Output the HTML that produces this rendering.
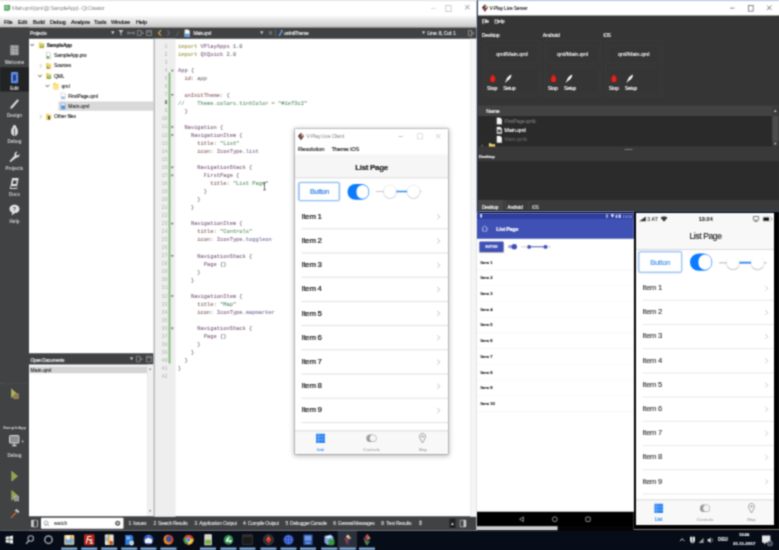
<!DOCTYPE html>
<html lang="en">
<head>
<meta charset="utf-8">
<title>Qt Creator - V-Play Live</title>
<style>
html,body{margin:0;padding:0;}
body{width:779px;height:550px;overflow:hidden;position:relative;background:#0c1421;font-family:"Liberation Sans",sans-serif;}
body{overflow:hidden;}
#wrap{position:absolute;left:-16px;top:-16px;width:811px;height:582px;filter:url(#soft);}
#root{position:absolute;left:16px;top:16px;width:3116px;height:2200px;transform:scale(.25);transform-origin:0 0;}
.a{position:absolute;}
.t{position:absolute;white-space:nowrap;line-height:1;-webkit-text-stroke:0.64px;}
.c{transform:translateX(-50%);}
/* ---------- Qt Creator ---------- */
#qt{left:0;top:0;width:1906px;height:2121.6px;background:#fff;overflow:hidden;}
#qt .title{left:0;top:0;width:1908px;height:66px;background:#fff;}
#qt .menu{left:0;top:63.2px;width:1908px;height:46.8px;background:linear-gradient(#fafafa,#e4e4e4 40%,#d4d4d4 75%,#bcbcbc);}
#qt .menu .t{font-size:22px;color:#222;top:14.8px;letter-spacing:-0.4px;-webkit-text-stroke:0.8px #222;}
.dk{background:#404244;}
.side .t{font-size:18px;color:#cdcdcd;font-weight:bold;-webkit-text-stroke:0;left:58px;transform:translateX(-50%);}
.code{font-family:"Liberation Mono",monospace;font-size:21.52px;left:712px;top:170.4px;line-height:32.2px;white-space:pre;color:#747474;position:absolute;margin:0;-webkit-text-stroke:0.4px;}
.code .k{color:#a6a65a;} .code .ty{color:#8a6a8a;} .code .p{color:#966a6a;} .code .s{color:#689a72;} .code .n{color:#7e7eaa;} .code .i{color:#7a7a7a;font-style:italic;}
.ln{font-family:"Liberation Mono",monospace;font-size:20px;line-height:32.2px;white-space:pre;color:#b4b4b4;position:absolute;margin:0;text-align:right;left:620px;width:50px;top:170.4px;}
.sb .t{font-size:21.6px;color:#d6d6d6;top:17.6px;letter-spacing:-0.4px;}
/* ---------- Live client ---------- */
#lc{left:1180px;top:516px;width:612px;height:1300px;background:#fff;box-shadow:0 4px 20px 4px rgba(0,0,0,.28),0 0 0 2.4px rgba(120,120,120,.5);overflow:hidden;}
.item{position:absolute;white-space:nowrap;line-height:1;color:#1a1a1a;-webkit-text-stroke:0.88px;}
.div{position:absolute;height:4px;background:#e1e1e1;}
.chev{position:absolute;width:12.8px;height:12.8px;border-right:3.6px solid #c4c4c4;border-top:3.6px solid #c4c4c4;transform:rotate(45deg);}
/* ---------- Live server ---------- */
#ls{left:1912px;top:0;width:1204px;height:848px;background:#353535;overflow:hidden;}
#ls .t{color:#f0f0f0;font-size:22.4px;letter-spacing:-0.4px;}
.gb{position:absolute;border:3.2px solid #3d3d3d;border-radius:6px;box-sizing:border-box;}
/* ---------- Android ---------- */
#an{left:1908px;top:850px;width:628px;height:1256px;background:#fff;overflow:hidden;}
#anb{left:1904.8px;top:850px;width:4px;height:1256px;background:#cfcfcf;}
#an .it{position:absolute;left:14.4px;font-size:16.4px;font-weight:bold;color:#1e1e1e;-webkit-text-stroke:0.56px;white-space:nowrap;line-height:1;}
/* ---------- iOS ---------- */
#iosf{left:2535.2px;top:848px;width:584px;height:1270px;background:#000;}
#ios{left:2544px;top:852px;width:552px;height:1248px;background:#fff;overflow:hidden;}
#ios .item{color:#2e2e2e;-webkit-text-stroke:0.32px;}
#ios .div{background:#e9e9e9;}
#ios .chev{border-color:#cfcfcf;}
/* ---------- Taskbar ---------- */
#tb{left:0;top:2121.6px;width:3116px;height:78.4px;background:#070d18;}
.ti{position:absolute;top:14.4px;width:44px;height:48px;border-radius:8px;}
.ul{position:absolute;top:68.8px;height:9.6px;width:64px;background:#7da6d4;}
.blur{}
</style>
</head>
<body>
<svg width="0" height="0" style="position:absolute"><filter id="soft" x="0" y="0" width="100%" height="100%" color-interpolation-filters="sRGB"><feConvolveMatrix order="3" kernelMatrix="0.0484 0.1232 0.0484 0.1232 0.3136 0.1232 0.0484 0.1232 0.0484" edgeMode="duplicate" preserveAlpha="true"/></filter></svg>
<div id="wrap">
<div id="root">
<!-- edge extensions (outside the viewport, keep blur from bleeding) -->
<div class="a" style="left:-48px;top:-48px;width:3212px;height:56px;background:#fff;"></div>
<div class="a" style="left:-48px;top:0;width:56px;height:68px;background:#fff;"></div>
<div class="a" style="left:3108px;top:0;width:56px;height:62.4px;background:#fff;"></div>
<div class="a" style="left:-48px;top:66px;width:56px;height:44px;background:#dcdcdc;"></div>
<div class="a" style="left:-48px;top:110px;width:56px;height:2012px;background:#404244;"></div>
<div class="a" style="left:3108px;top:60px;width:56px;height:792px;background:#353535;"></div>
<div class="a" style="left:3108px;top:848px;width:56px;height:1280px;background:#000;"></div>
<div class="a" style="left:-48px;top:2121.6px;width:3212px;height:128px;background:#070d18;"></div>

<!-- ================= QT CREATOR ================= -->
<div id="qt" class="a">
  <div class="a title">
    <div class="a" style="left:0;top:0;width:1908px;height:2.8px;background:#cfcfcf;"></div>
    <svg class="a" style="left:13.6px;top:16.8px" width="28" height="28" viewBox="0 0 7 7"><path d="M1.400 .8h4.600a.8 .8 0 0 1 .8 .8v3.200l-1.600 1.600H1.400a.8 .8 0 0 1-.8-.8V1.600a.8 .8 0 0 1 .8-.8z" fill="#48995a"/><path d="M2 2.200h2.600v2.400H2z" fill="none" stroke="#dff0e2" stroke-width=".7"/></svg>
    <div class="t blur" style="left:48px;top:19.6px;font-size:24.4px;color:#adadad;letter-spacing:-2.4px;">Main.qml (qml @ SampleApp) - Qt Creator</div>
    <div class="t" style="left:1724px;top:14px;font-size:32px;color:#bbb;">–</div>
    <div class="a" style="left:1782px;top:20px;width:18.4px;height:21.6px;border:3.2px solid #bdbdbd;"></div>
    <div class="t" style="left:1856px;top:14.4px;font-size:32px;color:#b0b0b0;">✕</div>
  </div>
  <div class="a menu blur">
    <div class="t" style="left:16px;">File</div>
    <div class="t" style="left:72px;">Edit</div>
    <div class="t" style="left:132px;">Build</div>
    <div class="t" style="left:200px;">Debug</div>
    <div class="t" style="left:284px;">Analyze</div>
    <div class="t" style="left:376px;">Tools</div>
    <div class="t" style="left:444px;">Window</div>
    <div class="t" style="left:544px;">Help</div>
  </div>
  <!-- left mode bar + toolbars -->
  <div class="a dk" style="left:0;top:110px;width:116px;height:2012px;"></div>
  <div class="a dk" style="left:0;top:110px;width:1908px;height:44.8px;"></div>
  <div class="a dk" style="left:116px;top:1413.2px;width:498px;height:45.2px;"></div>
  <div class="a dk sb" id="sbar" style="left:0;top:2064.8px;width:1908px;height:56.8px;">
    <div class="blur">
    <svg class="a" style="left:124px;top:12.8px" width="28" height="32" viewBox="0 0 7 8"><rect x=".5" y=".5" width="6" height="7" rx=".8" fill="none" stroke="#c8c8c8" stroke-width=".9"/><rect x=".5" y=".5" width="2.400" height="7" fill="#c8c8c8"/></svg>
    <div class="a" style="left:164px;top:6.4px;width:330.4px;height:44px;background:#fff;border-radius:4px;"></div>
    <svg class="a" style="left:174px;top:16px" width="24" height="26" viewBox="0 0 6 6.500"><circle cx="2.600" cy="2.600" r="1.900" fill="none" stroke="#8c8c8c" stroke-width=".8"/><path d="M1.400 5.800L2.600 4M4 4l1.400 1.800" stroke="#8c8c8c" stroke-width=".8"/></svg>
    <div class="t" style="left:215.6px;top:18px;color:#555;font-size:19.6px;letter-spacing:0.5px;">watch</div>
    <svg class="a" style="left:458px;top:15.6px" width="26" height="26" viewBox="0 0 6.500 6.500"><circle cx="3.200" cy="3.200" r="2.500" fill="#5c5c5c"/><circle cx="3.200" cy="3.200" r="1" fill="#fff"/></svg>
    <div class="t" style="left:513.6px;font-size:19.8px;letter-spacing:-0.828px;">1&nbsp; Issues</div>
    <div class="t" style="left:614px;font-size:19.8px;letter-spacing:-1.192px;">2&nbsp; Search Results</div>
    <div class="t" style="left:778.4px;font-size:19.8px;letter-spacing:-0.656px;">3&nbsp; Application Output</div>
    <div class="t" style="left:972.4px;font-size:19.8px;letter-spacing:-1.012px;">4&nbsp; Compile Output</div>
    <div class="t" style="left:1142px;font-size:19.8px;letter-spacing:-1.172px;">5&nbsp; Debugger Console</div>
    <div class="t" style="left:1333.2px;font-size:19.8px;letter-spacing:-1.248px;">6&nbsp; General Messages</div>
    <div class="t" style="left:1525.2px;font-size:19.8px;letter-spacing:-0.636px;">8&nbsp; Test Results</div>
    <div class="t" style="left:1672px;top:15.2px;font-size:24px;">⇕</div>
    <div class="a" style="left:1798px;top:9.6px;width:24px;height:38px;background:#1f2021;"></div><div class="t" style="left:1802.4px;top:20px;font-size:15.2px;color:#eee;">▲</div>
    <svg class="a" style="left:1838px;top:12.8px" width="28" height="32" viewBox="0 0 7 8"><rect x=".5" y=".5" width="6" height="7" rx=".8" fill="none" stroke="#c8c8c8" stroke-width=".9"/><rect x="4" y=".5" width="2.500" height="7" fill="#c8c8c8"/></svg>
    </div>
  </div>

  <!-- toolbar contents -->
  <div class="blur">
  <div class="t" style="left:120.4px;top:123.2px;font-size:19.6px;color:#e6e6e6;letter-spacing:-0.684px;">Projects</div>
  <div class="t" style="left:442px;top:122px;font-size:18.4px;color:#d8d8d8;">▼</div>
  <svg class="a" style="left:464px;top:114px" width="152" height="36" viewBox="0 0 38 9">
    <path d="M2.5 1.5h5l-2 2.8v3l-1 -.8v-2.2z" fill="#bdbdbd"/>
    <path d="M12.5 4.5h5M12 3v3M18 3v3" stroke="#9a9a9a" stroke-width="1" fill="none"/>
    <path d="M21.5 2h3.5v5h-3.5zM25 3l2.5 1.5l-2.5 1.5" stroke="#8e8e8e" stroke-width=".8" fill="none"/>
    <path d="M30.5 2h5v5h-5zM30.5 3.6h5" stroke="#8a8a8a" stroke-width=".9" fill="none"/>
  </svg>
  <svg class="a" style="left:624px;top:114px" width="160" height="36" viewBox="0 0 40 9">
    <path d="M5 1.6L2.6 4.5L5 7.4" stroke="#d89a3c" stroke-width="1.3" fill="none"/>
    <path d="M11.4 1.8L13.4 4.5L11.4 7.2" stroke="#6a6c6e" stroke-width="1.1" fill="none"/>
    <path d="M19.5 6.5l1 1l2.2-4.6" stroke="#666" stroke-width=".9" fill="none"/>
    <path d="M28.6 1h3.6l1.6 1.6v5.6h-5.2z" fill="#f4f4f4"/>
    <path d="M28.6 5.2h5.2v3h-5.2z" fill="#5b9bdc"/>
  </svg>
  <div class="t" style="left:773.6px;top:123.2px;font-size:19.6px;color:#e6e6e6;letter-spacing:-1.168px;">Main.qml</div>
  <div class="t" style="left:1038px;top:122px;font-size:18.4px;color:#d0d0d0;">▼</div>
  <div class="t" style="left:1070px;top:120px;font-size:22.4px;color:#8d8d8d;">✕</div>
  <div class="a" style="left:1100px;top:118px;width:2.8px;height:28px;background:#6a6a6a;"></div>
  <svg class="a" style="left:1110px;top:118px" width="24" height="28" viewBox="0 0 6 7"><path d="M1 6.2L3.6 1.6l1.2 .8L2.2 6.8z" fill="#58a0f0"/><path d="M3.4 .6l1.8 1.2" stroke="#9cc8ff" stroke-width="1"/></svg>
  <div class="t" style="left:1137.2px;top:123.2px;font-size:19.6px;color:#e6e6e6;letter-spacing:-1.12px;">onInitTheme</div>
  <div class="t" style="left:1686px;top:123.2px;font-size:16.8px;color:#d0d0d0;">▼</div>
  <div class="t" style="left:1710px;top:123.2px;font-size:19.6px;color:#e0e0e0;letter-spacing:-0.528px;">Line: 8, Col: 1</div>
  <svg class="a" style="left:1870px;top:118px" width="32" height="32" viewBox="0 0 8 8"><path d="M1 1h3v5.5h-3zM4 2.2l2.6 1.6L4 5.4" stroke="#9a9a9a" stroke-width=".8" fill="none"/></svg>
  </div>

  <!-- mode selector -->
  <div class="a" style="left:0;top:268.8px;width:116px;height:97.2px;background:#222324;"></div>
  <div class="side blur">
    <svg class="a" style="left:41.2px;top:181.2px" width="34" height="40.8" viewBox="0 0 8.5 10.2"><g fill="#8d8f91" stroke="#cfcfcf" stroke-width=".55"><rect x="0.4" y="0.4" width="2.1" height="2.5"/><rect x="3.2" y="0.4" width="2.1" height="2.5"/><rect x="6" y="0.4" width="2.1" height="2.5"/><rect x="0.4" y="3.8" width="2.1" height="2.5"/><rect x="3.2" y="3.8" width="2.1" height="2.5"/><rect x="6" y="3.8" width="2.1" height="2.5"/><rect x="0.4" y="7.2" width="2.1" height="2.5"/><rect x="3.2" y="7.2" width="2.1" height="2.5"/><rect x="6" y="7.2" width="2.1" height="2.5"/></g></svg>
    <div class="t" style="top:239.2px;">Welcome</div>
    <svg class="a" style="left:43.2px;top:288px" width="30.4" height="45.6" viewBox="0 0 7.6 11.4"><rect x=".5" y=".5" width="6.6" height="10.4" rx=".9" fill="#2f6fe0" stroke="#8db6ff" stroke-width=".8"/><rect x="1.9" y="2.2" width="3.8" height="7" fill="#1c3c96" stroke="#dbe6ff" stroke-width=".6" stroke-dasharray=".9 .5"/></svg>
    <div class="t" style="top:344.8px;color:#e6e6e6;">Edit</div>
    <svg class="a" style="left:36px;top:392px" width="44" height="48" viewBox="0 0 11 12"><path d="M1.200 11l.8-2.800L8.400 1.200l1.600 1.400L3.400 10.200z" fill="#d6d6d6"/></svg>
    <div class="t" style="top:451.2px;">Design</div>
    <svg class="a" style="left:38px;top:498px" width="40" height="48" viewBox="0 0 10 12"><ellipse cx="5" cy="7" rx="3.4" ry="4.4" fill="#dcdcdc"/><circle cx="5" cy="2.4" r="1.9" fill="#dcdcdc"/><path d="M5 4v7" stroke="#404244" stroke-width=".8"/></svg>
    <div class="t" style="top:556.8px;">Debug</div>
    <svg class="a" style="left:36px;top:604px" width="44" height="48" viewBox="0 0 11 12"><path d="M1.2 11.2L.6 10l5-5.4c-.6-1.8 .2-3.4 2.2-4l.6 .4-1.4 1.8 .6 1.4 1.6 .2 1.2-1.6c.6 2-.6 3.8-2.8 3.8z" fill="#e0e0e0"/></svg>
    <div class="t" style="top:663.2px;">Projects</div>
    <svg class="a" style="left:38px;top:710px" width="40" height="48" viewBox="0 0 10 12"><path d="M2.6 .6h6.6l-1.6 8.2H1z" fill="#dedede"/><path d="M1 8.8l-.4 2.2h6.8l.2-1" stroke="#dedede" stroke-width="1" fill="none"/><path d="M3.8 3h3.4l-.6 3.4H3.200z" fill="#404244"/></svg>
    <div class="t" style="top:768.8px;">Docs</div>
    <svg class="a" style="left:36px;top:816px" width="44" height="48" viewBox="0 0 11 12"><path d="M5.5 .8c2.800 0 5 1.800 5 4.200s-2.200 4.200-5 4.200l-2.800 2.200 .4-2.800C1.400 7.800 .5 6.500 .5 5 .5 2.600 2.700 .8 5.500 .8z" fill="#e2e2e2"/><text x="3.6" y="7.300" font-size="6" font-weight="bold" fill="#404244" font-family="Liberation Sans">?</text></svg>
    <div class="t" style="top:875.2px;">Help</div>

    <svg class="a" style="left:38px;top:1550px" width="40" height="48" viewBox="0 0 10 12"><path d="M1.600 .8l5.600 5-5.600 5z" fill="#a9b45c"/><path d="M4.200 6.200h4.600v4.800H4.200z" fill="#8b7a52" stroke="#c9a85a" stroke-width=".6"/></svg>
    <div class="a" style="left:4px;top:1532px;width:108px;height:0;border-top:2.4px dotted #6a6c6e;"></div>
    <div class="t" style="top:1702.4px;font-size:16.8px;">SampleApp</div>
    <svg class="a" style="left:34px;top:1738px" width="64" height="52" viewBox="0 0 16 13"><rect x="1" y="1" width="9.4" height="7.600" rx=".8" fill="#8e9092" stroke="#d8d8d8" stroke-width="1"/><path d="M3.600 11.200h4.400M5.800 8.800v2.400" stroke="#d8d8d8" stroke-width="1.200"/><path d="M13.800 5.500l1.400 1.400-1.400 1.400z" fill="#e8e8e8"/></svg>
    <div class="t" style="top:1811.2px;">Debug</div>
    <svg class="a" style="left:43.2px;top:1882px" width="32" height="46" viewBox="0 0 8 11.5"><path d="M1 .8l5.800 4.900L1 10.600z" fill="#8fa548" stroke="#b5c878" stroke-width=".5"/></svg>
    <svg class="a" style="left:43.2px;top:1959.2px" width="36" height="48" viewBox="0 0 9 12"><path d="M1 .8l5.800 4.900L1 10.600z" fill="#8fa548" stroke="#b5c878" stroke-width=".5"/><rect x="3.800" y="6.400" width="4.200" height="4.800" fill="#8f9193" stroke="#c8c8c8" stroke-width=".5"/></svg>
    <svg class="a" style="left:37.6px;top:2030.4px" width="44" height="48" viewBox="0 0 12 11"><path d="M1 10l5.600-6.200 1.200 1.200L2.200 10.800z" fill="#d06a28"/><path d="M5.400 2.200L8 .6l3 3-1.600 1.400z" fill="#c9c9c9"/></svg>
  </div>

  <!-- project tree -->
  <div class="a" style="left:234px;top:406.4px;width:379.6px;height:36.8px;background:#d9d9d9;"></div>
  <div class="blur" id="tree">
    <svg class="a" style="left:120.4px;top:172px" width="17.6" height="16" viewBox="0 0 4.4 4"><path d="M.4 .8L2.200 3l1.800-2.200" stroke="#555" stroke-width=".9" fill="none"/></svg>
    <svg class="a" style="left:154px;top:165.6px" width="24" height="28.8" viewBox="0 0 6 7.200"><path d="M0 .8h2.400l.6 .8h3v5.400H0z" fill="#f3d56b"/><rect x="1.600" y="3.400" width="3.600" height="3" fill="#7aa83c"/><rect x="2.400" y="4" width="1.600" height="1.200" fill="#fff"/></svg>
    <div class="t" style="left:186.8px;top:169.6px;font-size:19.56px;color:#222;font-weight:bold;letter-spacing:-0.764px;">SampleApp</div>
    <svg class="a" style="left:184px;top:207.2px" width="20" height="28.8" viewBox="0 0 5 7.200"><path d="M.4 .3h2.800l1.400 1.400v5.200H.4z" fill="#fff" stroke="#9a9a9a" stroke-width=".5"/><rect x=".8" y="4.400" width="2.400" height="2.200" fill="#58a944"/></svg>
    <div class="t" style="left:216px;top:210.8px;font-size:20px;color:#3a3a3a;font-weight:normal;letter-spacing:-0.604px;">SampleApp.pro</div>
    <svg class="a" style="left:154.8px;top:253.6px" width="16" height="19.2" viewBox="0 0 4 4.800"><path d="M.8 .4L3 2.400L.8 4.400" stroke="#b5b5b5" stroke-width=".8" fill="none"/></svg>
    <svg class="a" style="left:184px;top:248.8px" width="22.4" height="28.8" viewBox="0 0 5.600 7.200"><path d="M0 .8h2.400l.6 .8h2.600v5.400H0z" fill="#f3d56b"/><text x="1" y="6.300" font-size="4" font-weight="bold" fill="#3d6aa8" font-family="Liberation Sans">h</text></svg>
    <div class="t" style="left:216px;top:252.4px;font-size:20px;color:#3a3a3a;font-weight:normal;letter-spacing:-0.768px;">Sources</div>
    <svg class="a" style="left:151.2px;top:295.6px" width="17.6" height="16" viewBox="0 0 4.4 4"><path d="M.4 .8L2.200 3l1.800-2.200" stroke="#555" stroke-width=".9" fill="none"/></svg>
    <svg class="a" style="left:184px;top:289.2px" width="22.4" height="28.8" viewBox="0 0 5.600 7.200"><path d="M0 .8h2.400l.6 .8h2.600v5.400H0z" fill="#f3d56b"/><rect x="1.200" y="3.400" width="3.400" height="3" fill="#5f9d4d"/><rect x="1.800" y="4" width="2" height="1" fill="#e8f4e0"/></svg>
    <div class="t" style="left:216px;top:292.8px;font-size:20px;color:#3a3a3a;font-weight:normal;letter-spacing:-1.112px;">QML</div>
    <svg class="a" style="left:181.2px;top:335.6px" width="17.6" height="16" viewBox="0 0 4.4 4"><path d="M.4 .8L2.200 3l1.800-2.200" stroke="#555" stroke-width=".9" fill="none"/></svg>
    <svg class="a" style="left:210.8px;top:329.2px" width="24" height="29.6" viewBox="0 0 6 7.400"><path d="M.2 .6h2.600l.8 1h2.200v5.600H.2z" fill="#f6d868"/><path d="M.2 2.400h5.600v4.800H.2z" fill="#fae38d"/></svg>
    <div class="t" style="left:245.6px;top:332.8px;font-size:20px;color:#3a3a3a;font-weight:normal;letter-spacing:0.724px;">qml</div>
    <svg class="a" style="left:242px;top:369.6px" width="20.8" height="28.8" viewBox="0 0 5.200 7.200"><path d="M.4 .3h3l1.400 1.400v5.200H.4z" fill="#fff" stroke="#a4a4a4" stroke-width=".5"/><rect x="1" y="4.200" width="3.200" height="1.800" fill="#7aa7dc"/></svg>
    <div class="t" style="left:273.2px;top:373.2px;font-size:20px;color:#3a3a3a;font-weight:normal;letter-spacing:-0.412px;">FirstPage.qml</div>
    <svg class="a" style="left:242px;top:410.4px" width="20.8" height="28.8" viewBox="0 0 5.200 7.200"><path d="M.4 .3h3l1.400 1.400v5.200H.4z" fill="#e8f0fb" stroke="#5c8fd0" stroke-width=".6"/><rect x=".8" y="3" width="3.600" height="3.400" fill="#4f8fdc"/></svg>
    <div class="t" style="left:273.2px;top:414px;font-size:20px;color:#3a3a3a;font-weight:normal;letter-spacing:0.46px;">Main.qml</div>
    <svg class="a" style="left:154.8px;top:456.8px" width="16" height="19.2" viewBox="0 0 4 4.800"><path d="M.8 .4L3 2.400L.8 4.400" stroke="#b5b5b5" stroke-width=".8" fill="none"/></svg>
    <svg class="a" style="left:184px;top:452px" width="22.4" height="28.8" viewBox="0 0 5.600 7.200"><path d="M0 .8h2.400l.6 .8h2.600v5.400H0z" fill="#f3d56b"/><path d="M2 6.600V3.600l1-1 1 1v3z" fill="#555"/></svg>
    <div class="t" style="left:216px;top:455.6px;font-size:20px;color:#3a3a3a;font-weight:normal;letter-spacing:-0.284px;">Other files</div>
  </div>

  <!-- open documents -->
  <div class="blur">
  <div class="t" style="left:122.4px;top:1430px;font-size:19.6px;color:#e8e8e8;letter-spacing:-1.332px;">Open Documents</div>
  <div class="t" style="left:518px;top:1426.4px;font-size:17.2px;color:#d6d6d6;">▼</div>
  <svg class="a" style="left:540px;top:1420px" width="72" height="32" viewBox="0 0 18 8"><path d="M1.500 1.200h3.400v5.600H1.500zM4.900 2.400l2.400 1.600-2.400 1.600" stroke="#909090" stroke-width=".8" fill="none"/><path d="M11.500 1.200h5v5.600h-5zM11.500 2.800h5" stroke="#8c8c8c" stroke-width=".9" fill="none"/></svg>
  <div class="a" style="left:118px;top:1465.6px;width:470px;height:27.2px;background:#d4d4d4;"></div>
  <div class="t" style="left:122.4px;top:1470px;font-size:20px;color:#333;letter-spacing:0.26px;">Main.qml</div>
  </div>
  <div class="a" style="left:590.4px;top:1458.4px;width:23.2px;height:605.6px;background:#f0f0f0;border-left:2px solid #dcdcdc;"></div>
  <div class="t" style="left:594.4px;top:1468px;font-size:13.6px;color:#8a8a8a;">▲</div>
  <div class="t" style="left:594.4px;top:2036px;font-size:13.6px;color:#8a8a8a;">▼</div>
  <!-- project tree splitter -->
  <div class="a" style="left:613.6px;top:154.8px;width:6.4px;height:1912px;background:#b9b9b9;"></div>
  <!-- editor gutter -->
  <div class="a" style="left:620px;top:154.8px;width:82px;height:1912px;background:#eeeeee;"></div>
  <div class="a" style="left:674px;top:290.4px;width:7.6px;height:1164px;background:#84bd7a;"></div>

  <!-- editor -->
  <pre class="ln blur">1
2
3
4
5
6
7
<b style="color:#555">8</b>
9
10
11
12
13
14
15
16
17
18
19
20
21
22
23
24
25
26
27
28
29
30
31
32
33
34
35
36
37
38
39
40
41
42</pre>
  <svg class="a" style="left:682.4px;top:277.2px" width="14.4" height="12" viewBox="0 0 3.600 3"><path d="M.2 .4h3.200L1.800 2.800z" fill="#7d7d7d"/></svg><svg class="a" style="left:682.4px;top:374px" width="14.4" height="12" viewBox="0 0 3.600 3"><path d="M.2 .4h3.200L1.800 2.800z" fill="#7d7d7d"/></svg><svg class="a" style="left:682.4px;top:502.8px" width="14.4" height="12" viewBox="0 0 3.600 3"><path d="M.2 .4h3.200L1.800 2.800z" fill="#7d7d7d"/></svg><svg class="a" style="left:682.4px;top:535.2px" width="14.4" height="12" viewBox="0 0 3.600 3"><path d="M.2 .4h3.200L1.800 2.800z" fill="#7d7d7d"/></svg><svg class="a" style="left:682.4px;top:664px" width="14.4" height="12" viewBox="0 0 3.600 3"><path d="M.2 .4h3.200L1.800 2.800z" fill="#7d7d7d"/></svg><svg class="a" style="left:682.4px;top:696px" width="14.4" height="12" viewBox="0 0 3.600 3"><path d="M.2 .4h3.200L1.800 2.800z" fill="#7d7d7d"/></svg><svg class="a" style="left:682.4px;top:889.2px" width="14.4" height="12" viewBox="0 0 3.600 3"><path d="M.2 .4h3.200L1.800 2.800z" fill="#7d7d7d"/></svg><svg class="a" style="left:682.4px;top:1018px" width="14.4" height="12" viewBox="0 0 3.600 3"><path d="M.2 .4h3.200L1.800 2.800z" fill="#7d7d7d"/></svg><svg class="a" style="left:682.4px;top:1179.2px" width="14.4" height="12" viewBox="0 0 3.600 3"><path d="M.2 .4h3.200L1.800 2.800z" fill="#7d7d7d"/></svg><svg class="a" style="left:682.4px;top:1308px" width="14.4" height="12" viewBox="0 0 3.600 3"><path d="M.2 .4h3.200L1.800 2.800z" fill="#7d7d7d"/></svg>
  <pre class="code blur"><span class="k">import</span> <span class="ty">VPlayApps</span> 1.0
<span class="k">import</span> <span class="ty">QtQuick</span> 2.0

<span class="ty">App</span> {
  <span class="p">id</span>: <span class="i">app</span>

  <span class="p">onInitTheme</span>: {
<span class="s">//    Theme.colors.tintColor = "#1e73c2"</span>
  }

  <span class="ty">Navigation</span> {
    <span class="ty">NavigationItem</span> {
      <span class="p">title</span>: <span class="s">"List"</span>
      <span class="p">icon</span>: <span class="ty">IconType</span>.<span class="n">list</span>

      <span class="ty">NavigationStack</span> {
        <span class="ty">FirstPage</span> {
          <span class="p">title</span>: <span class="s">"List Page"</span>
        }
      }
    }

    <span class="ty">NavigationItem</span> {
      <span class="p">title</span>: <span class="s">"Controls"</span>
      <span class="p">icon</span>: <span class="ty">IconType</span>.<span class="n">toggleon</span>

      <span class="ty">NavigationStack</span> {
        <span class="ty">Page</span> {}
      }
    }

    <span class="ty">NavigationItem</span> {
      <span class="p">title</span>: <span class="s">"Map"</span>
      <span class="p">icon</span>: <span class="ty">IconType</span>.<span class="n">mapmarker</span>

      <span class="ty">NavigationStack</span> {
        <span class="ty">Page</span> {}
      }
    }
  }
}
</pre>
  <div id="ibeam" class="a" style="left:1056.8px;top:730px;width:3.2px;height:30px;background:#444;"></div>
  <div class="a" style="left:1052.8px;top:729.2px;width:11.2px;height:2.8px;background:#555;"></div>
  <div class="a" style="left:1052.8px;top:758.4px;width:11.2px;height:2.8px;background:#555;"></div>
  <!-- editor scrollbar -->
  <div class="a" style="left:1881.6px;top:154.8px;width:24.8px;height:1912px;background:#f5f5f5;border-left:2.4px solid #e2e2e2;"></div>
</div>

<!-- ================= LIVE SERVER ================= -->
<div class="a" style="left:1906px;top:0;width:8px;height:852px;background:#26354d;"></div>
<div id="ls" class="a">
  <div class="a" style="left:0;top:0;width:1204px;height:62.4px;background:#fff;border-top:3.6px solid #7ea6d4;box-sizing:border-box;"></div>
  <div class="blur">
  <svg class="a" style="left:14.4px;top:16px" width="28" height="32" viewBox="0 0 7 8"><path d="M3.500 .2L6.600 3.600 3.500 7.800 .4 3.600z" fill="#2d3f73"/><path d="M3.500 .2L6.600 3.600 3.500 4.400z" fill="#e7a23a"/><path d="M.4 3.600L3.500 4.400 3.500 7.800z" fill="#c43c2e"/></svg>
  <div class="t" style="left:46.4px;top:20.8px;font-size:20.08px;color:#3a3a3a;letter-spacing:-0.812px;">V-Play Live Server</div>
  <div class="a" style="left:1008px;top:31.2px;width:18px;height:3.2px;background:#6a6a6a;"></div>
  <div class="a" style="left:1080px;top:20px;width:16px;height:20px;border:3.2px solid #666;"></div>
  <svg class="a" style="left:1154px;top:20px" width="22" height="22" viewBox="0 0 5.500 5.500"><path d="M.5 .5l4.500 4.500M5 .5L.5 5" stroke="#555" stroke-width=".8"/></svg>
  <div class="t" style="left:16px;top:74.4px;font-size:20px;letter-spacing:-1.256px;"><u>F</u>ile</div>
  <div class="t" style="left:66.4px;top:74.4px;font-size:20px;letter-spacing:-0.484px;"><u>H</u>elp</div>
  <div class="t" style="left:15.2px;top:129.2px;font-size:20.4px;letter-spacing:-0.62px;">Desktop</div>
  <div class="t" style="left:259.2px;top:129.2px;font-size:20.4px;letter-spacing:-0.32px;">Android</div>
  <div class="t" style="left:502px;top:129.2px;font-size:20.4px;letter-spacing:-1.988px;">iOS</div>
  </div>
  <div class="gb" style="left:22px;top:162px;width:230px;height:224px;"></div>
  <div class="gb" style="left:32px;top:182px;width:210px;height:72px;"></div>
  <div class="gb" style="left:32px;top:268px;width:210px;height:108px;border-color:#3c3c3c;"></div>
  <div class="t c blur" style="left:136px;top:206.4px;font-size:21.6px;color:#e6e6e6;letter-spacing:-0.216px;">qml/Main.qml</div>
  <svg class="a blur" style="left:42.8px;top:298px" width="32" height="34" viewBox="0 0 8 8.500"><ellipse cx="4" cy="4.600" rx="2.400" ry="3.200" fill="#e8231a"/><circle cx="4" cy="1.600" r="1.300" fill="#d3201a"/><path d="M.4 2.400l1.800 1.400M7.600 2.400L5.800 3.800M.2 5h1.600M7.800 5H6.200M.6 7.800l1.600-1.400M7.400 7.800L5.800 6.400" stroke="#b8150f" stroke-width=".7"/></svg>
  <svg class="a blur" style="left:106px;top:296px" width="32" height="36" viewBox="0 0 8 9"><path d="M1 8.200C1.600 5 3.600 1.800 7 .6 7 3.600 5 6.200 2.400 7z" fill="#f2f2f2"/><path d="M.8 8.600l1.600-2.400" stroke="#f2f2f2" stroke-width=".7"/></svg>
  <div class="t c blur" style="left:56.4px;top:342.8px;font-size:20.8px;letter-spacing:-0.572px;">Stop</div>
  <div class="t c blur" style="left:124.8px;top:342.8px;font-size:20.8px;letter-spacing:-1.164px;">Setup</div>
  <div class="gb" style="left:264.8px;top:162px;width:230px;height:224px;"></div>
  <div class="gb" style="left:274.8px;top:182px;width:210px;height:72px;"></div>
  <div class="gb" style="left:274.8px;top:268px;width:210px;height:108px;border-color:#3c3c3c;"></div>
  <div class="t c blur" style="left:378px;top:206.4px;font-size:21.6px;color:#e6e6e6;letter-spacing:-0.384px;">qml/Main.qml</div>
  <svg class="a blur" style="left:285.6px;top:298px" width="32" height="34" viewBox="0 0 8 8.500"><ellipse cx="4" cy="4.600" rx="2.400" ry="3.200" fill="#e8231a"/><circle cx="4" cy="1.600" r="1.300" fill="#d3201a"/><path d="M.4 2.400l1.800 1.400M7.600 2.400L5.800 3.800M.2 5h1.600M7.800 5H6.200M.6 7.800l1.600-1.400M7.400 7.800L5.800 6.400" stroke="#b8150f" stroke-width=".7"/></svg>
  <svg class="a blur" style="left:348.8px;top:296px" width="32" height="36" viewBox="0 0 8 9"><path d="M1 8.200C1.600 5 3.600 1.800 7 .6 7 3.600 5 6.200 2.400 7z" fill="#f2f2f2"/><path d="M.8 8.600l1.600-2.400" stroke="#f2f2f2" stroke-width=".7"/></svg>
  <div class="t c blur" style="left:299.2px;top:342.8px;font-size:20.8px;letter-spacing:-0.672px;">Stop</div>
  <div class="t c blur" style="left:368px;top:342.8px;font-size:20.8px;letter-spacing:-1.404px;">Setup</div>
  <div class="gb" style="left:507.6px;top:162px;width:230px;height:224px;"></div>
  <div class="gb" style="left:517.6px;top:182px;width:210px;height:72px;"></div>
  <div class="gb" style="left:517.6px;top:268px;width:210px;height:108px;border-color:#3c3c3c;"></div>
  <div class="t c blur" style="left:622.8px;top:206.4px;font-size:21.6px;color:#e6e6e6;letter-spacing:-0.216px;">qml/Main.qml</div>
  <svg class="a blur" style="left:528.4px;top:298px" width="32" height="34" viewBox="0 0 8 8.500"><ellipse cx="4" cy="4.600" rx="2.400" ry="3.200" fill="#e8231a"/><circle cx="4" cy="1.600" r="1.300" fill="#d3201a"/><path d="M.4 2.400l1.800 1.400M7.600 2.400L5.800 3.800M.2 5h1.600M7.800 5H6.200M.6 7.800l1.600-1.400M7.400 7.800L5.800 6.400" stroke="#b8150f" stroke-width=".7"/></svg>
  <svg class="a blur" style="left:591.6px;top:296px" width="32" height="36" viewBox="0 0 8 9"><path d="M1 8.200C1.600 5 3.600 1.800 7 .6 7 3.600 5 6.200 2.400 7z" fill="#f2f2f2"/><path d="M.8 8.600l1.600-2.400" stroke="#f2f2f2" stroke-width=".7"/></svg>
  <div class="t c blur" style="left:543.2px;top:342.8px;font-size:20.8px;letter-spacing:-0.672px;">Stop</div>
  <div class="t c blur" style="left:611.2px;top:342.8px;font-size:20.8px;letter-spacing:-1.164px;">Setup</div>
  <div class="a" style="left:0;top:421.6px;width:1204px;height:42.8px;background:#424242;"></div>
  <div class="a" style="left:0;top:464.4px;width:1204px;height:122px;background:#2a2a2a;"></div>
  <div class="a" style="left:0;top:586.4px;width:1204px;height:58.4px;background:#393939;"></div>
  <div class="a" style="left:0;top:644.8px;width:1204px;height:155.2px;background:#2b2b2b;"></div>
  <div class="a" style="left:0;top:800px;width:1204px;height:48px;background:#3a3a3a;"></div>
  <div class="a" style="left:0;top:844px;width:1204px;height:4px;background:#2c4a6e;"></div>
  <div class="a" style="left:0;top:800px;width:102px;height:44px;background:#474747;"></div>
  <div class="a" style="left:1176px;top:421.6px;width:28px;height:164.8px;background:#3c3c3c;"></div>
  <div class="a" style="left:1178px;top:464px;width:24px;height:100px;background:#4c4c4c;"></div>
  <div class="t" style="left:1181.6px;top:434px;font-size:14.4px;color:#ddd;">▲</div>
  <div class="t" style="left:1181.6px;top:566px;font-size:14.4px;color:#bbb;">▼</div>
  <div class="a" style="left:586px;top:596px;width:32px;height:4px;background:#7a7a7a;"></div>
  <div class="blur">
  <div class="t" style="left:33.2px;top:432.8px;font-size:21.2px;letter-spacing:-0.828px;">Name</div>
  <svg class="a" style="left:73.2px;top:468.8px" width="24" height="30" viewBox="0 0 6 7.500"><path d="M.4 .2h3.400l1.800 1.800v5.300H.4z" fill="#f4f4f4"/></svg>
  <div class="t" style="left:106.4px;top:474px;font-size:20.8px;color:#707070;letter-spacing:-0.996px;">FirstPage.qmlc</div>
  <svg class="a" style="left:73.2px;top:505.6px" width="24" height="30" viewBox="0 0 6 7.500"><path d="M.4 .2h3.400l1.800 1.800v5.300H.4z" fill="#f4f4f4"/><rect x="1.200" y="3" width="3.600" height="3" fill="#555"/></svg>
  <div class="t" style="left:106.4px;top:509.2px;font-size:20.8px;color:#f2f2f2;letter-spacing:0.028px;">Main.qml</div>
  <svg class="a" style="left:73.2px;top:542.4px" width="24" height="30" viewBox="0 0 6 7.500"><path d="M.4 .2h3.400l1.800 1.800v5.300H.4z" fill="#f4f4f4"/></svg>
  <div class="t" style="left:106.4px;top:546.4px;font-size:20.8px;color:#5c5c5c;letter-spacing:-0.46px;">Main.qmlc</div>
  <div class="t" style="left:14px;top:574.4px;font-size:16px;color:#999;">›</div>
  <svg class="a" style="left:42px;top:571.2px" width="28" height="16" viewBox="0 0 7 4"><path d="M.2 .6h2.400l.6 .8h3.600v2.600H.2z" fill="#f1d36c"/></svg>
  <div class="t" style="left:3.2px;top:616.8px;font-size:17.28px;font-weight:bold;color:#e8e8e8;letter-spacing:-0.692px;">Desktop</div>
  <div class="t" style="left:16px;top:818.8px;font-size:18.8px;letter-spacing:-0.628px;">Desktop</div>
  <div class="t" style="left:118.4px;top:818.8px;font-size:18.8px;letter-spacing:-0.604px;">Android</div>
  <div class="t" style="left:216.8px;top:818.8px;font-size:18.8px;color:#cfcfcf;letter-spacing:-2.284px;">iOS</div>
  <div class="a" style="left:109.2px;top:804px;width:2.4px;height:36px;background:#505050;"></div>
  <div class="a" style="left:201.6px;top:804px;width:2.4px;height:36px;background:#505050;"></div>
  </div>
</div>

<!-- ================= ANDROID ================= -->
<div id="anb" class="a"></div>
<div id="an" class="a">
  <div class="a" style="left:0;top:0;width:628px;height:26.4px;background:#303f9f;"></div>
  <div class="a" style="left:0;top:26.4px;width:628px;height:78.4px;background:#3f51b5;"></div>
  <div class="blur">
  <div class="a" style="left:13.2px;top:6.4px;width:6.4px;height:13.6px;background:#e8eaf6;border-radius:2px;"></div>
  <svg class="a" style="left:512px;top:4.8px" width="108" height="18" viewBox="0 0 27 4.500"><path d="M1 .4l2 3.600M3 .4L1 4M2 0v4.400" stroke="#dfe3fa" stroke-width=".5"/><path d="M5.600 .6h3.600L7.400 4.200z" fill="#eef0ff"/><path d="M10.600 4.200V1.200l1.800-.8v3.800z" fill="#c9cef0"/><rect x="13.800" y=".6" width="1.800" height="3.600" fill="#eef0ff"/><text x="17.600" y="4" font-size="3.800" fill="#c5cbf2" font-family="Liberation Sans">13:24</text></svg>
  <svg class="a" style="left:17.6px;top:51.2px" width="26" height="26" viewBox="0 0 6.500 6.500"><path d="M.4 3.200L3.250 .6 6.100 3.200M1.200 2.800v3.200h4.100V2.800" fill="none" stroke="#c7cdf0" stroke-width=".8"/></svg>
  <div class="t" style="left:77.2px;top:56.8px;font-size:21.44px;font-weight:bold;color:#fff;letter-spacing:-0.856px;">List Page</div>
  </div>
  <div class="a" style="left:10px;top:116px;width:96px;height:42.4px;background:#3f51b5;border-radius:3.2px;box-shadow:0 2px 4px rgba(0,0,0,.3);"></div>
  <div class="t c blur" style="left:57.6px;top:134.4px;font-size:11.8px;color:#e8eafc;font-weight:bold;letter-spacing:-0.456px;">BUTTON</div>
  <div class="a blur" style="left:124px;top:130.4px;width:32px;height:12.8px;border-radius:8px;background:#9fa8da;"></div>
  <div class="a blur" style="left:138px;top:125.6px;width:22.4px;height:22.4px;border-radius:12px;background:#3f51b5;"></div>
  <div class="a" style="left:176px;top:135.6px;width:120px;height:3.2px;background:#c4c4c4;"></div>
  <div class="a" style="left:208px;top:134.8px;width:68px;height:4.4px;background:#5c6bc0;"></div>
  <div class="a blur" style="left:200.8px;top:129.6px;width:15.2px;height:15.2px;border-radius:8px;background:#3f51b5;"></div>
  <div class="a blur" style="left:266.4px;top:129.6px;width:15.2px;height:15.2px;border-radius:8px;background:#3f51b5;"></div>
  <div class="it blur" style="top:190px;">Item 1</div>
  <div class="a" style="left:0;top:229.2px;width:628px;height:2.4px;background:#f4f4f4;"></div>
  <div class="it blur" style="top:252.8px;">Item 2</div>
  <div class="a" style="left:0;top:292px;width:628px;height:2.4px;background:#f4f4f4;"></div>
  <div class="it blur" style="top:315.6px;">Item 3</div>
  <div class="a" style="left:0;top:354.8px;width:628px;height:2.4px;background:#f4f4f4;"></div>
  <div class="it blur" style="top:378.4px;">Item 4</div>
  <div class="a" style="left:0;top:417.6px;width:628px;height:2.4px;background:#f4f4f4;"></div>
  <div class="it blur" style="top:441.2px;">Item 5</div>
  <div class="a" style="left:0;top:480.4px;width:628px;height:2.4px;background:#f4f4f4;"></div>
  <div class="it blur" style="top:504px;">Item 6</div>
  <div class="a" style="left:0;top:543.2px;width:628px;height:2.4px;background:#f4f4f4;"></div>
  <div class="it blur" style="top:566.8px;">Item 7</div>
  <div class="a" style="left:0;top:606px;width:628px;height:2.4px;background:#f4f4f4;"></div>
  <div class="it blur" style="top:629.6px;">Item 8</div>
  <div class="a" style="left:0;top:668.8px;width:628px;height:2.4px;background:#f4f4f4;"></div>
  <div class="it blur" style="top:692.4px;">Item 9</div>
  <div class="a" style="left:0;top:731.6px;width:628px;height:2.4px;background:#f4f4f4;"></div>
  <div class="it blur" style="top:755.2px;">Item 10</div>
  <div class="a" style="left:0;top:794.4px;width:628px;height:2.4px;background:#f4f4f4;"></div>
  <div class="a" style="left:0;top:1196.8px;width:628px;height:60px;background:#000;"></div>
  <svg class="a blur" style="left:0;top:1196.8px" width="628" height="60" viewBox="0 0 157 15"><path d="M46.400 5.200L42.600 7.500l3.800 2.300z" fill="none" stroke="#b0b0b0" stroke-width=".8"/><circle cx="77.800" cy="7.500" r="2.400" fill="none" stroke="#b0b0b0" stroke-width=".8"/><rect x="108.800" y="5.300" width="4.400" height="4.400" rx=".6" fill="none" stroke="#b0b0b0" stroke-width=".8"/></svg>
</div>
<div class="a" style="left:1905.6px;top:2104.8px;width:325.6px;height:17.2px;background:#cbcbcb;"></div>
<div class="a" style="left:2231.2px;top:2104px;width:888px;height:40px;background:linear-gradient(#040404 40%,#070d18);"></div>

<!-- ================= iOS ================= -->
<div id="iosf" class="a"></div>
<div id="ios" class="a">
  <div class="a" style="left:0;top:0;width:552px;height:144px;background:#f8f8f8;border-bottom:3.2px solid #cfcfcf;"></div>
  <div class="blur">
  <svg class="a" style="left:12px;top:14px" width="28" height="20" viewBox="0 0 7 5"><path d="M0 5L6.800 0V5z" fill="#333"/></svg>
  <div class="t" style="left:44.8px;top:14.4px;font-size:20px;color:#444;letter-spacing:0.912px;">3 AT</div>
  <svg class="a" style="left:98px;top:12.8px" width="28" height="22" viewBox="0 0 7 5.500"><path d="M0 1.600C2 -.400 5-.400 7 1.600L3.500 5.400z" fill="#3a3a3a"/></svg>
  <div class="t c" style="left:278.8px;top:13.6px;font-size:21.6px;color:#333;font-weight:bold;letter-spacing:0.092px;">13:24</div>
  <svg class="a" style="left:466px;top:12px" width="28" height="24" viewBox="0 0 7 6"><rect x=".8" y=".4" width="5.400" height="3.800" rx=".6" fill="none" stroke="#555" stroke-width=".8"/><path d="M2 5.600h3" stroke="#555" stroke-width=".8"/></svg>
  <svg class="a" style="left:506px;top:13.6px" width="40" height="20.8" viewBox="0 0 10 5.200"><rect x=".3" y=".3" width="8.400" height="4.600" rx="1" fill="none" stroke="#999" stroke-width=".6"/><rect x=".9" y=".9" width="5.600" height="3.400" rx=".5" fill="#111"/><rect x="9" y="1.600" width=".8" height="2" fill="#999"/></svg>
  <div class="t c" style="left:278px;top:76.4px;font-size:33.8px;color:#1e1e1e;letter-spacing:-1.368px;">List Page</div>
  </div>
  <div class="a blur" style="left:10px;top:154.4px;width:173.6px;height:83.2px;box-sizing:border-box;border:3.6px solid #6aa5ea;border-radius:8.8px;box-shadow:0 0 6px rgba(90,156,236,.6);"></div>
  <div class="t c blur" style="left:96.8px;top:182px;font-size:29.6px;color:#4a95ec;letter-spacing:-0.912px;">Button</div>
  <div class="a" style="left:216px;top:162.4px;width:88.8px;height:68.8px;border-radius:34.4px;background:#0b7bff;"></div>
  <div class="a" style="left:250.4px;top:166.4px;width:51.2px;height:60.8px;border-radius:28px;background:#fff;"></div>
  <div class="a" style="left:332px;top:196px;width:190.4px;height:5.6px;background:#cdcdcd;"></div>
  <div class="a" style="left:412px;top:195.2px;width:56px;height:7.2px;background:#2f8af5;"></div>
  <div class="a" style="left:362px;top:172px;width:52px;height:52px;border-radius:28px;background:#fff;box-shadow:0 3.2px 4.8px rgba(0,0,0,.3);"></div>
  <div class="a" style="left:459.6px;top:172px;width:52px;height:52px;border-radius:28px;background:#fff;box-shadow:0 3.2px 4.8px rgba(0,0,0,.3);"></div>
  <div class="item blur" style="left:26px;top:282.8px;font-size:30.8px;letter-spacing:-1.28px;">Item 1</div>
  <div class="chev" style="left:510.4px;top:292.8px;"></div>
  <div class="div" style="left:26px;top:347.2px;width:528px;"></div>
  <div class="item blur" style="left:26px;top:379.6px;font-size:30.8px;letter-spacing:-1.28px;">Item 2</div>
  <div class="chev" style="left:510.4px;top:389.6px;"></div>
  <div class="div" style="left:26px;top:444px;width:528px;"></div>
  <div class="item blur" style="left:26px;top:476.4px;font-size:30.8px;letter-spacing:-1.28px;">Item 3</div>
  <div class="chev" style="left:510.4px;top:486.4px;"></div>
  <div class="div" style="left:26px;top:540.8px;width:528px;"></div>
  <div class="item blur" style="left:26px;top:573.2px;font-size:30.8px;letter-spacing:-1.28px;">Item 4</div>
  <div class="chev" style="left:510.4px;top:583.2px;"></div>
  <div class="div" style="left:26px;top:637.6px;width:528px;"></div>
  <div class="item blur" style="left:26px;top:670px;font-size:30.8px;letter-spacing:-1.28px;">Item 5</div>
  <div class="chev" style="left:510.4px;top:680px;"></div>
  <div class="div" style="left:26px;top:734.4px;width:528px;"></div>
  <div class="item blur" style="left:26px;top:766.8px;font-size:30.8px;letter-spacing:-1.28px;">Item 6</div>
  <div class="chev" style="left:510.4px;top:776.8px;"></div>
  <div class="div" style="left:26px;top:831.2px;width:528px;"></div>
  <div class="item blur" style="left:26px;top:863.6px;font-size:30.8px;letter-spacing:-1.28px;">Item 7</div>
  <div class="chev" style="left:510.4px;top:873.6px;"></div>
  <div class="div" style="left:26px;top:928px;width:528px;"></div>
  <div class="item blur" style="left:26px;top:960.4px;font-size:30.8px;letter-spacing:-1.28px;">Item 8</div>
  <div class="chev" style="left:510.4px;top:970.4px;"></div>
  <div class="div" style="left:26px;top:1024.8px;width:528px;"></div>
  <div class="item blur" style="left:26px;top:1057.2px;font-size:30.8px;letter-spacing:-1.28px;">Item 9</div>
  <div class="chev" style="left:510.4px;top:1067.2px;"></div>
  <div class="div" style="left:26px;top:1121.6px;width:528px;"></div>
  <div class="a" style="left:0;top:1146px;width:552px;height:104px;background:#f8f8f8;border-top:3.2px solid #d0d0d0;"></div>
  <div class="blur">
  <svg class="a" style="left:72.8px;top:1162px" width="36" height="38" viewBox="0 0 9 9.500"><rect x="0" y="0" width="9" height="9.500" fill="#2f86ef"/><path d="M0 3.200h9M0 6.400h9M2.600 0v9.500" stroke="#8cc0ff" stroke-width=".6"/></svg>
  <div class="t c" style="left:90px;top:1218px;font-size:18.64px;color:#2f86ef;letter-spacing:0.356px;">List</div>
  <svg class="a" style="left:254px;top:1164px" width="44" height="34" viewBox="0 0 11 8.500"><rect x=".4" y=".4" width="10.200" height="7.700" rx="3.850" fill="#9a9a9a"/><circle cx="6.900" cy="4.250" r="3.200" fill="#f4f4f4"/></svg>
  <div class="t c" style="left:276.8px;top:1218.8px;font-size:16.8px;color:#b4b4b4;letter-spacing:0.604px;">Controls</div>
  <svg class="a" style="left:448px;top:1160px" width="28" height="42" viewBox="0 0 7 10.500"><path d="M3.500 .5C1.800 .5 .6 1.800 .6 3.400 .6 5.400 3.500 10 3.500 10s2.900-4.600 2.900-6.600C6.400 1.800 5.200 .5 3.500 .5z" fill="none" stroke="#8d8d8d" stroke-width=".9"/><circle cx="3.500" cy="3.400" r="1" fill="#8d8d8d"/></svg>
  <div class="t c" style="left:462px;top:1218.8px;font-size:16.8px;color:#b4b4b4;letter-spacing:0.472px;">Map</div>
  </div>
</div>

<!-- ================= LIVE CLIENT ================= -->
<div id="lc" class="a">
  <div class="blur">
  <svg class="a" style="left:10.4px;top:14px" width="28" height="32" viewBox="0 0 7 8"><path d="M3.500 .2L6.600 3.600 3.500 7.800 .4 3.600z" fill="#2d3f73"/><path d="M3.500 .2L6.600 3.600 3.500 4.400z" fill="#e7a23a"/><path d="M.4 3.600L3.500 4.400 3.500 7.800z" fill="#c43c2e"/></svg>
  <div class="t" style="left:45.2px;top:15.6px;font-size:21.2px;color:#a9a9a9;letter-spacing:-0.848px;">V-Play Live Client</div>
  <div class="a" style="left:414px;top:28px;width:18px;height:2.8px;background:#b5b5b5;"></div>
  <div class="a" style="left:490px;top:18px;width:16px;height:19.2px;border:2.8px solid #bcbcbc;"></div>
  <svg class="a" style="left:562px;top:17.6px" width="22" height="22" viewBox="0 0 5.500 5.500"><path d="M.5 .5l4.500 4.500M5 .5L.5 5" stroke="#b8b8b8" stroke-width=".7"/></svg>
  <div class="t" style="left:12px;top:67.2px;font-size:23.2px;color:#2c2c2c;letter-spacing:-0.396px;">Resolution</div>
  <div class="t" style="left:145.6px;top:67.2px;font-size:23.2px;color:#2c2c2c;letter-spacing:-1.332px;">Theme: iOS</div>
  </div>
  <div class="a" style="left:0;top:102.4px;width:612px;height:92px;background:#f6f6f6;border-bottom:3.2px solid #d4d4d4;"></div>
  <div class="t c blur" style="left:306.4px;top:135.6px;font-size:31.96px;font-weight:bold;color:#1c1c1c;letter-spacing:-1.288px;">List Page</div>
  <div class="a blur" style="left:15.2px;top:213.2px;width:163.2px;height:75.2px;box-sizing:border-box;border:3.6px solid #5a9cec;border-radius:8px;box-shadow:0 0 6px rgba(90,156,236,.6);"></div>
  <div class="t c blur" style="left:98px;top:236.4px;font-size:28.8px;color:#2a7fe2;letter-spacing:-1.32px;">Button</div>
  <div class="a" style="left:210.4px;top:220px;width:86.4px;height:63.2px;border-radius:32px;background:#0b7bff;"></div>
  <div class="a" style="left:245.6px;top:224px;width:48px;height:55.2px;border-radius:28px;background:#fff;"></div>
  <div class="a" style="left:323.2px;top:248px;width:184px;height:4px;background:#c9c9c9;"></div>
  <div class="a" style="left:380px;top:246.8px;width:94px;height:6.4px;background:#2f8af5;"></div>
  <div class="a" style="left:354px;top:224px;width:52px;height:52px;border-radius:28px;background:#fff;box-shadow:0 2px 4.8px rgba(0,0,0,.35);box-sizing:border-box;border:1.6px solid #ddd;"></div>
  <div class="a" style="left:448px;top:224px;width:52px;height:52px;border-radius:28px;background:#fff;box-shadow:0 2px 4.8px rgba(0,0,0,.35);box-sizing:border-box;border:1.6px solid #ddd;"></div>
  <div class="item blur" style="left:26px;top:332.8px;font-size:31.6px;letter-spacing:-1.2px;">Item 1</div>
  <div class="chev" style="left:562.4px;top:343.2px;"></div>
  <div class="div" style="left:26px;top:397.2px;width:588px;"></div>
  <div class="item blur" style="left:26px;top:429.6px;font-size:31.6px;letter-spacing:-1.2px;">Item 2</div>
  <div class="chev" style="left:562.4px;top:440px;"></div>
  <div class="div" style="left:26px;top:494px;width:588px;"></div>
  <div class="item blur" style="left:26px;top:526.4px;font-size:31.6px;letter-spacing:-1.2px;">Item 3</div>
  <div class="chev" style="left:562.4px;top:536.8px;"></div>
  <div class="div" style="left:26px;top:590.8px;width:588px;"></div>
  <div class="item blur" style="left:26px;top:623.2px;font-size:31.6px;letter-spacing:-1.2px;">Item 4</div>
  <div class="chev" style="left:562.4px;top:633.6px;"></div>
  <div class="div" style="left:26px;top:687.6px;width:588px;"></div>
  <div class="item blur" style="left:26px;top:720px;font-size:31.6px;letter-spacing:-1.2px;">Item 5</div>
  <div class="chev" style="left:562.4px;top:730.4px;"></div>
  <div class="div" style="left:26px;top:784.4px;width:588px;"></div>
  <div class="item blur" style="left:26px;top:816.8px;font-size:31.6px;letter-spacing:-1.2px;">Item 6</div>
  <div class="chev" style="left:562.4px;top:827.2px;"></div>
  <div class="div" style="left:26px;top:881.2px;width:588px;"></div>
  <div class="item blur" style="left:26px;top:913.6px;font-size:31.6px;letter-spacing:-1.2px;">Item 7</div>
  <div class="chev" style="left:562.4px;top:924px;"></div>
  <div class="div" style="left:26px;top:978px;width:588px;"></div>
  <div class="item blur" style="left:26px;top:1010.4px;font-size:31.6px;letter-spacing:-1.2px;">Item 8</div>
  <div class="chev" style="left:562.4px;top:1020.8px;"></div>
  <div class="div" style="left:26px;top:1074.8px;width:588px;"></div>
  <div class="item blur" style="left:26px;top:1107.2px;font-size:31.6px;letter-spacing:-1.2px;">Item 9</div>
  <div class="chev" style="left:562.4px;top:1117.6px;"></div>
  <div class="div" style="left:26px;top:1171.6px;width:588px;"></div>
  <div class="a" style="left:0;top:1206.4px;width:612px;height:96px;background:#f8f8f8;border-top:3.2px solid #cfcfcf;"></div>
  <div class="blur">
  <svg class="a" style="left:84px;top:1218px" width="36" height="38" viewBox="0 0 9 9.500"><rect x="0" y="0" width="9" height="9.500" fill="#2f86ef"/><path d="M0 3.200h9M0 6.400h9M2.600 0v9.500" stroke="#8cc0ff" stroke-width=".6"/></svg>
  <div class="t c" style="left:101.6px;top:1272.8px;font-size:16.8px;color:#2f86ef;letter-spacing:0.384px;">List</div>
  <svg class="a" style="left:284px;top:1220px" width="44" height="34" viewBox="0 0 11 8.500"><rect x=".4" y=".4" width="10.200" height="7.700" rx="3.850" fill="#9a9a9a"/><circle cx="6.900" cy="4.250" r="3.200" fill="#f4f4f4"/></svg>
  <div class="t c" style="left:306.4px;top:1272.8px;font-size:16.8px;color:#b4b4b4;letter-spacing:0.504px;">Controls</div>
  <svg class="a" style="left:496px;top:1216px" width="28" height="42" viewBox="0 0 7 10.500"><path d="M3.500 .5C1.800 .5 .6 1.800 .6 3.400 .6 5.400 3.500 10 3.500 10s2.900-4.600 2.900-6.600C6.400 1.800 5.200 .5 3.500 .5z" fill="none" stroke="#8d8d8d" stroke-width=".9"/><circle cx="3.500" cy="3.400" r="1" fill="#8d8d8d"/></svg>
  <div class="t c" style="left:511.2px;top:1272.8px;font-size:16.8px;color:#b4b4b4;letter-spacing:-0.196px;">Map</div>
  </div>
</div>

<!-- ================= TASKBAR ================= -->
<div id="tb" class="a">
  <div class="a" style="left:1350.8px;top:0;width:77.2px;height:78.4px;background:#2a313d;"></div>
  <div class="blur">
  <svg class="a" style="left:12.8px;top:12px" width="48" height="50" viewBox="0 0 12 12.500"><g fill="#ececec"><path d="M2.400 3.300l3.200-.5v3.100H2.400zM6.100 2.700l3.700-.6v3.800H6.100zM2.400 6.500h3.200v3.100l-3.200-.5zM6.100 6.500h3.700v3.800l-3.700-.6z"/></g></svg>
  <svg class="a" style="left:94.8px;top:12px" width="48" height="50" viewBox="0 0 12 12.500"><circle cx="7" cy="5" r="2.700" fill="none" stroke="#a9adb3" stroke-width="1.100"/><path d="M5 7.200L2.400 10.200" stroke="#a9adb3" stroke-width="1.300"/></svg>
  <svg class="a" style="left:169.6px;top:12px" width="48" height="50" viewBox="0 0 12 12.500"><circle cx="6" cy="6.200" r="3.700" fill="none" stroke="#9ea2a8" stroke-width="1.500"/></svg>
  <svg class="a" style="left:253.2px;top:12px" width="48" height="50" viewBox="0 0 12 12.500"><rect x="1" y="1.400" width="10" height="9.800" rx="1" fill="#e9d58a"/><rect x="2" y="5" width="8" height="5" fill="#7fa9dc"/><rect x="3.400" y="2" width="3" height="4" fill="#f4f4f4"/><rect x="7" y="2.400" width="2.400" height="2.400" fill="#e8b13a"/></svg>
  <svg class="a" style="left:333.2px;top:12px" width="48" height="50" viewBox="0 0 12 12.500"><rect x=".8" y=".8" width="10.400" height="11" rx="1" fill="#b3261c"/><path d="M3 9.800L4.600 3h3.600M4 6h2.600M6.200 9.800h2.800L6.600 6.400h2.600" stroke="#fbeee6" stroke-width="1.100" fill="none"/></svg>
  <svg class="a" style="left:413.2px;top:12px" width="48" height="50" viewBox="0 0 12 12.500"><rect x="1.600" y="1" width="8.800" height="10.600" rx="1" fill="#e9e4d6"/><path d="M5.600 1.600v9.400" stroke="#d9b23c" stroke-width="1.800"/><path d="M6.600 7l3.400 1.400-1 2.800H6.600z" fill="#c5412c"/><rect x="2.200" y="3" width="2.400" height="5" fill="#9bb6d8"/></svg>
  <svg class="a" style="left:492.8px;top:12px" width="48" height="50" viewBox="0 0 12 12.500"><path d="M2 1.600h6.600l1.400 2v6.600l-3 1.400H2z" fill="#2f7be0"/><path d="M3 3h4v3H3z" fill="#79b4f5"/><circle cx="8.400" cy="9.600" r="2.300" fill="#eef2f0"/><circle cx="8.400" cy="9.600" r="1" fill="#7bbd62"/></svg>
  <svg class="a" style="left:569.6px;top:12px" width="48" height="50" viewBox="0 0 12 12.500"><circle cx="6" cy="6.200" r="5" fill="#2c55b8"/><path d="M2.400 5.800L6 4l3.600 1.800v4H2.400z" fill="#f0f0f0"/><path d="M2.600 3.200C4 1.200 8 1 9.800 3.400 8 2.600 4.400 2.600 2.600 3.200z" fill="#6d94e6"/></svg>
  <svg class="a" style="left:649.6px;top:12px" width="48" height="50" viewBox="0 0 12 12.500"><circle cx="6" cy="6.200" r="5" fill="#d5461c"/><circle cx="6.200" cy="5.600" r="2.800" fill="#3253b5"/><path d="M1.200 5C1.600 2 4 1 6 1.200 3.800 2.200 3 4 3.600 6.200 4.200 8.800 7 9.600 9.400 8.400 8 11 3.600 11.800 1.800 8.800z" fill="#eb8a1f"/></svg>
  <svg class="a" style="left:729.6px;top:12px" width="48" height="50" viewBox="0 0 12 12.500"><circle cx="6" cy="6.200" r="5" fill="#d8412f"/><path d="M6 6.200L1.700 3.700A5 5 0 0 0 5.200 11.100z" fill="#3f9d4c"/><path d="M6 6.200l-.8 4.900A5 5 0 0 0 10.900 5z" fill="#f0c230"/><circle cx="6" cy="6.200" r="2.200" fill="#f4f4f4"/><circle cx="6" cy="6.200" r="1.700" fill="#3c78d8"/></svg>
  <svg class="a" style="left:808.4px;top:12px" width="48" height="50" viewBox="0 0 12 12.500"><rect x="2.400" y=".8" width="7.400" height="11" rx=".6" fill="#ecebe0"/><rect x="3.200" y="6" width="5.800" height="5" fill="#7fae52"/><path d="M3.400 2.600h5M3.400 4.200h5" stroke="#b9b49c" stroke-width=".7"/></svg>
  <svg class="a" style="left:890px;top:12px" width="48" height="50" viewBox="0 0 12 12.500"><circle cx="6" cy="6.400" r="4.800" fill="#2f8a4a"/><path d="M3.600 8.600C3 5.400 5 3 8.400 3.200 6.400 4.200 5.600 6 6.200 8.400z" fill="#e8efe6"/><circle cx="7.800" cy="7.600" r="1.600" fill="#cfe3d2"/></svg>
  <svg class="a" style="left:966px;top:12px" width="48" height="50" viewBox="0 0 12 12.500"><rect x=".8" y="1.200" width="10.400" height="10" rx=".6" fill="#1b1b1b" stroke="#4a4a4a" stroke-width=".6"/><rect x="1.400" y="1.800" width="9.200" height="1.600" fill="#353535"/></svg>
  <svg class="a" style="left:1049.6px;top:12px" width="48" height="50" viewBox="0 0 12 12.500"><circle cx="6" cy="6.200" r="5" fill="#2b2b2f" stroke="#5a5a5a" stroke-width=".6"/><path d="M6 2.600l3 3.400-3 4-3-4z" fill="#d3352b"/><path d="M6 2.600l1.400 3.400H4.600z" fill="#ef6a5a"/></svg>
  <svg class="a" style="left:1129.6px;top:12px" width="48" height="50" viewBox="0 0 12 12.500"><circle cx="6" cy="6.200" r="5.200" fill="#2549b4"/><circle cx="6" cy="6.200" r="3.600" fill="none" stroke="#6e91ea" stroke-width=".8"/><path d="M2.400 6.200h7.200M6 2.600v7.200" stroke="#6e91ea" stroke-width=".7"/></svg>
  <svg class="a" style="left:1208px;top:12px" width="48" height="50" viewBox="0 0 12 12.500"><rect x="1.400" y="1" width="9.200" height="10.600" rx=".8" fill="#2c57b0"/><rect x="2.600" y="2.200" width="6.800" height="5" fill="#6f9be0"/><path d="M3.400 9.400h5.200" stroke="#b9cdf0" stroke-width=".9"/></svg>
  <svg class="a" style="left:1293.2px;top:12px" width="48" height="50" viewBox="0 0 12 12.500"><path d="M1.200 2.600L7.600 1l2.600 2.400v6L4 11.400 1.200 9z" fill="#7fa6dc"/><path d="M2 3.200l5-1.200 2 1.800-5 1.200z" fill="#e3ecf8"/><path d="M5.400 6h5.800v4.400L9.800 11.800H5.400z" fill="#3a9b3a"/></svg>
  <svg class="a" style="left:1366.8px;top:12px" width="48" height="50" viewBox="0 0 12 12.500"><path d="M6 .6l3.600 4.200L6 12 2.400 4.800z" fill="#2b3d78"/><path d="M6 .6l3.600 4.200L6 6z" fill="#d99a3a"/><path d="M2.400 4.800L6 6v6z" fill="#b5382c"/><circle cx="6" cy="3" r="1.500" fill="#e0c7a0"/></svg>
  <svg class="a" style="left:1444px;top:12px" width="48" height="50" viewBox="0 0 12 12.500"><path d="M6 .6l3.600 4.200L6 12 2.400 4.800z" fill="#2b3d78"/><path d="M6 .6l3.600 4.200L6 6z" fill="#d99a3a"/><path d="M2.400 4.800L6 6v6z" fill="#b5382c"/><circle cx="6" cy="3" r="1.500" fill="#cf4b3a"/><path d="M3 8l3 4 3-4z" fill="#3f8f4a"/></svg>
  <div class="ul" style="left:245.2px;"></div>
  <div class="ul" style="left:325.2px;"></div>
  <div class="ul" style="left:405.2px;"></div>
  <div class="ul" style="left:484.8px;"></div>
  <div class="ul" style="left:561.6px;"></div>
  <div class="ul" style="left:641.6px;"></div>
  <div class="ul" style="left:800.4px;"></div>
  <div class="ul" style="left:882px;"></div>
  <div class="ul" style="left:958px;"></div>
  <div class="ul" style="left:1041.6px;"></div>
  <div class="ul" style="left:1121.6px;"></div>
  <div class="ul" style="left:1200px;"></div>
  <div class="ul" style="left:1285.2px;"></div>
  <div class="ul" style="left:1358.8px;"></div>
  <div class="ul" style="left:1436px;"></div>
  <svg class="a" style="left:2712px;top:20px" width="160" height="36" viewBox="0 0 40 9"><path d="M2 5.600L4.200 3.200 6.400 5.600" stroke="#d8d8d8" stroke-width=".9" fill="none"/><path d="M12 1.200h5v3.600c0 1.600-1.200 2.600-2.500 3.200C13.200 7.400 12 6.400 12 4.800z" fill="#e4e4e4"/><path d="M14.500 1.200v6.800" stroke="#070d18" stroke-width=".6"/><path d="M20.600 7.600l5-5.400v5.400z" fill="#9a9a9a"/><path d="M29.600 3.600h1.400l1.800-1.600v5.600L31 6h-1.400z" fill="#d8d8d8"/><path d="M34 2.800c.9 .9 .9 2.700 0 3.600" stroke="#bcbcbc" stroke-width=".6" fill="none"/></svg>
  <div class="t" style="left:2872px;top:26.4px;font-size:18.4px;color:#e4e4e4;font-weight:bold;letter-spacing:0.4px;">DEU</div>
  <div class="t c" style="left:2976px;top:7.6px;font-size:17.6px;color:#e8e8e8;font-weight:bold;letter-spacing:-0.984px;">13:24</div>
  <div class="t c" style="left:2976.8px;top:44.8px;font-size:17.6px;color:#e8e8e8;font-weight:bold;letter-spacing:0.268px;">21.11.2017</div>
  <svg class="a" style="left:3044px;top:16px" width="48" height="48" viewBox="0 0 12 12"><path d="M1 1h8.400v7H5L3 10V8H1z" fill="#e6e6e6"/><circle cx="9" cy="9" r="2.600" fill="#39424f" stroke="#aab4c2" stroke-width=".5"/></svg>
  </div>
</div>

</div>
</div>
</body>
</html>
